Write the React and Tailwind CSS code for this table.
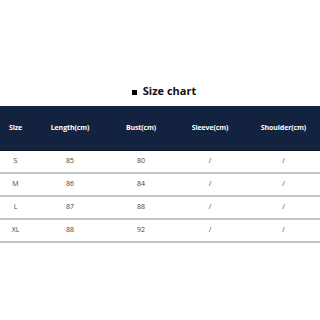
export default function App() {
  const rows = [
    ["S", "85", "80", "/", "/"],
    ["M", "86", "84", "/", "/"],
    ["L", "87", "88", "/", "/"],
    ["XL", "88", "92", "/", "/"],
  ];
  const heads = ["Size", "Length(cm)", "Bust(cm)", "Sleeve(cm)", "Shoulder(cm)"];
  const cols = "grid grid-cols-[31px_78px_64px_74px_73px]";
  return (
    <div className="w-[320px] h-[320px] bg-white flex flex-col" style={{ fontFamily: '"Open Sans", "Noto Sans", sans-serif' }}>
      <div className="h-[80px]" />
      <div className="h-[26px] flex items-start justify-center gap-[6px] pl-[8px]">
        <span className="w-[5px] h-[5px] bg-black mt-[10px]" />
        <span className="text-[11px] font-bold text-[#111] leading-[22px]">Size chart</span>
      </div>
      <div className={`${cols} h-[45px] bg-[#13233f] items-center border-b border-[#0b1629]`}>
        {heads.map((h) => (
          <div key={h} className="text-center text-[7px] font-bold text-white tracking-[-0.1px]">{h}</div>
        ))}
      </div>
      {rows.map((r, i) => (
        <div key={i} className={`${cols} h-[23px] items-center border-b-2 border-[#c4c4c4]`}>
          {r.map((c, j) => (
            <div key={j} className="text-center text-[7px] text-[#444]">{c}</div>
          ))}
        </div>
      ))}
    </div>
  );
}
